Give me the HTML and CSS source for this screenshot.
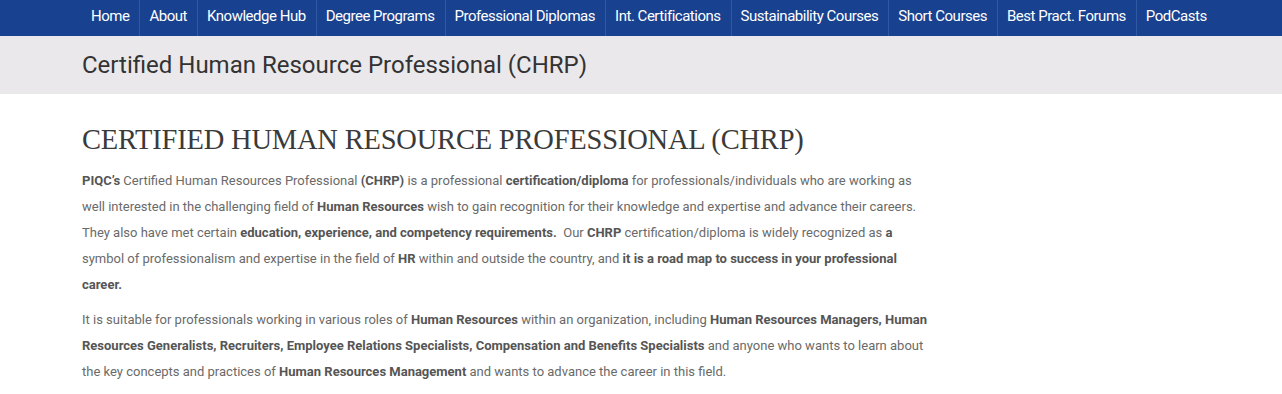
FILE: index.html
```html
<!DOCTYPE html>
<html lang="en">

<head>
    <meta charset="UTF-8">
    <meta name="viewport" content="width=device-width, initial-scale=1.0">
    <title>Certified Human Resource Professional (CHRP)</title>
    <link rel="stylesheet" href="styles.css">
</head>

<body>
    <nav class="main-nav">
        <ul class="menu">
            <li><a href="#">Home</a></li>
            <li><a href="#">About</a></li>
            <li><a href="#">Knowledge Hub</a></li>
            <li><a href="#">Degree Programs</a></li>
            <li><a href="#">Professional Diplomas</a></li>
            <li><a href="#">Int. Certifications</a></li>
            <li><a href="#">Sustainability Courses</a></li>
            <li><a href="#">Short Courses</a></li>
            <li><a href="#">Best Pract. Forums</a></li>
            <li><a href="#">PodCasts</a></li>
        </ul>
    </nav>

    <div class="page-title">
        <h1>Certified Human Resource Professional (CHRP)</h1>
    </div>

    <div class="content">
        <h2 class="entry-title">CERTIFIED HUMAN RESOURCE PROFESSIONAL (CHRP)</h2>
        <p><strong>PIQC’s</strong> Certified Human Resources Professional <strong>(CHRP)</strong> is a professional <strong>certification/diploma</strong> for professionals/individuals who are working as well interested in the challenging field of <strong>Human Resources</strong> wish to gain recognition for their knowledge and expertise and advance their careers. They also have met certain <strong>education, experience, and competency requirements.</strong>&nbsp; Our <strong>CHRP</strong> certification/diploma is widely recognized as <strong>a</strong> symbol of professionalism and expertise in the field of <strong>HR</strong> within and outside the country, and <strong>it is a road map to success in your professional career.</strong></p>
        <p>It is suitable for professionals working in various roles of <strong>Human Resources</strong> within an organization, including <strong>Human Resources Managers, Human Resources Generalists, Recruiters, Employee Relations Specialists, Compensation and Benefits Specialists</strong> and anyone who wants to learn about the key concepts and practices of <strong>Human Resources Management</strong> and wants to advance the career in this field.</p>
    </div>
</body>

</html>
```

FILE: styles.css
```css
body {
    margin: 0;
    font-family: Roboto, "Liberation Sans", sans-serif;
    background: #fff;
}

.main-nav {
    background: #18418f;
    height: 36px;
    padding-left: 82px;
}

.menu {
    list-style: none;
    margin: 0;
    padding: 0;
    display: flex;
    height: 100%;
}

.menu li {
    border-left: 1px solid #3159a3;
}

.menu li:first-child {
    border-left: none;
}

.menu a {
    display: block;
    padding: 0 10px 0 9px;
    line-height: 33px;
    color: #fff;
    font-size: 15px;
    text-decoration: none;
    letter-spacing: -0.48px;
}

.page-title {
    background: #eae8eb;
    height: 58px;
    padding-left: 82px;
    display: flex;
    align-items: center;
}

.page-title h1 {
    margin: 0;
    font-size: 24px;
    font-weight: 400;
    color: #333;
}

.content {
    padding: 28px 0 0 82px;
    width: 852px;
}

.entry-title {
    margin: 0 0 10px;
    font-family: "Liberation Serif", "DejaVu Serif", serif;
    font-weight: 400;
    font-size: 28.5px;
    line-height: 36px;
    color: #3a3a3a;
    letter-spacing: -0.2px;
}

.content p {
    margin: 0 0 9px;
    font-size: 13px;
    line-height: 26px;
    color: #6a6a6a;
}

.content strong {
    color: #555;
}
```
